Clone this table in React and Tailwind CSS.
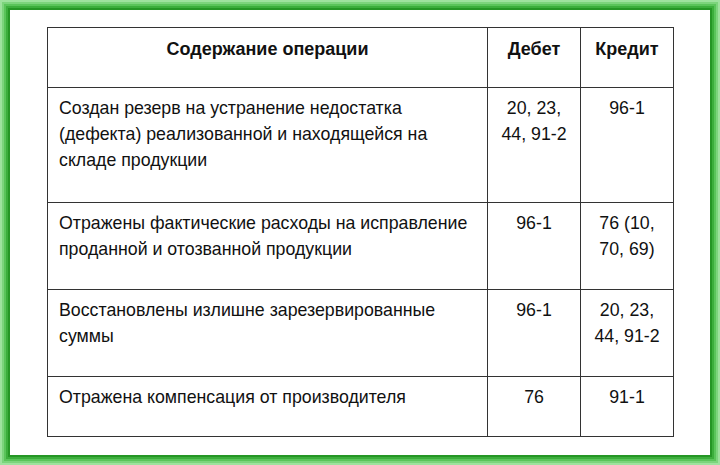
const rows = [
  {
    text: ['Создан резерв на устранение недостатка', '(дефекта) реализованной и находящейся на', 'складе продукции'],
    debit: ['20, 23,', '44, 91-2'],
    credit: ['96-1'],
    h: 'h-[115px]',
  },
  {
    text: ['Отражены фактические расходы на исправление', 'проданной и отозванной продукции'],
    debit: ['96-1'],
    credit: ['76 (10,', '70, 69)'],
    h: 'h-[87px]',
  },
  {
    text: ['Восстановлены излишне зарезервированные', 'суммы'],
    debit: ['96-1'],
    credit: ['20, 23,', '44, 91-2'],
    h: 'h-[87px]',
  },
  {
    text: ['Отражена компенсация от производителя'],
    debit: ['76'],
    credit: ['91-1'],
    h: 'h-[60px]',
  },
];

function Lines({ items }) {
  return items.map((t, i) => (
    <div key={i} className="whitespace-nowrap">{t}</div>
  ));
}

export default function App() {
  return (
    <div className="w-[720px] h-[465px] bg-white p-[10px] shadow-[inset_0_0_0_2px_#9ee29e,inset_0_0_0_4px_#7cd47c,inset_0_0_0_6px_#5ac45a,inset_0_0_0_8px_#3cae3c,inset_0_0_0_10px_#259625] font-['Liberation_Sans',Arial,sans-serif] text-[#111]">
      <div className="pl-[37px] pt-[17px]">
        <table className="table-fixed border-collapse w-[626px] text-[17.75px] leading-[26px]">
          <colgroup>
            <col className="w-[440px]" />
            <col className="w-[93px]" />
            <col className="w-[93px]" />
          </colgroup>
          <thead>
            <tr className="h-[60px] text-[18px]">
              <th className="border border-[#333] align-top pt-[8px] text-center font-bold">Содержание операции</th>
              <th className="border border-[#333] align-top pt-[8px] text-center font-bold">Дебет</th>
              <th className="border border-[#333] align-top pt-[8px] text-center font-bold">Кредит</th>
            </tr>
          </thead>
          <tbody>
            {rows.map((r, i) => (
              <tr key={i} className={r.h}>
                <td className="border border-[#333] align-top pt-[7px] pl-[11px] text-left">
                  <Lines items={r.text} />
                </td>
                <td className="border border-[#333] align-top pt-[7px] text-center">
                  <Lines items={r.debit} />
                </td>
                <td className="border border-[#333] align-top pt-[7px] text-center">
                  <Lines items={r.credit} />
                </td>
              </tr>
            ))}
          </tbody>
        </table>
      </div>
    </div>
  );
}
